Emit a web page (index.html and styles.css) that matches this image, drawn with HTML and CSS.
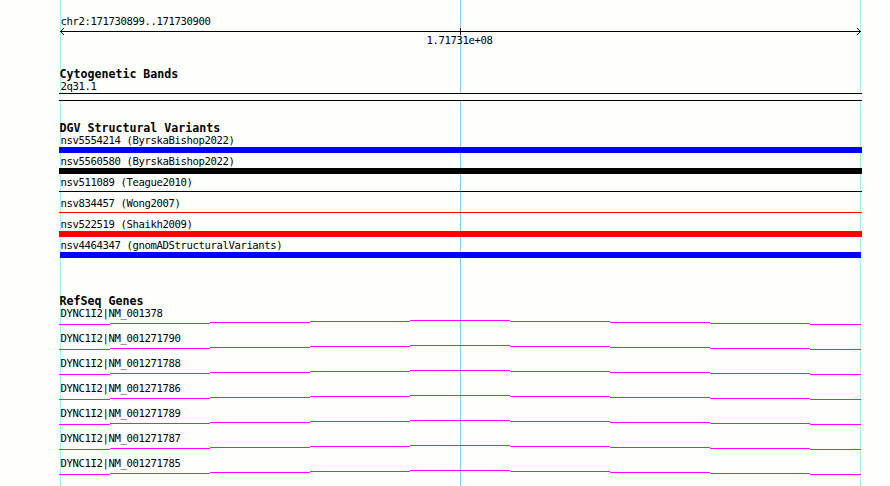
FILE: index.html
```
<!DOCTYPE html>
<html lang="en">
<head>
  <meta charset="UTF-8">
  <title>chr2:171730899..171730900</title>
  <link rel="stylesheet" href="styles.css">
</head>
<body>

  <svg class="defs" width="0" height="0">
    <defs>
      <path id="intron" d="M0 4.5H51M51 3.5H151M151 2.5H251M251 1.5H351M351 .5H451M451 1.5H551M551 2.5H651M651 3.5H751M751 4.5H802" />
    </defs>
  </svg>

  <div class="browser">
    <div class="ruler">
      <div class="label">chr2:171730899..171730900</div>
      <svg class="axis" width="803" height="7" viewBox="0 0 803 7">
        <path d="M1 3h801v1H1zM401 0h1v7h-1z" />
        <path d="M2 2h1v1h-1zM3 1h1v1h-1zM4 0h1v1h-1zM2 4h1v1h-1zM3 5h1v1h-1zM4 6h1v1h-1z" />
        <path d="M800 2h1v1h-1zM799 1h1v1h-1zM798 0h1v1h-1zM800 4h1v1h-1zM799 5h1v1h-1zM798 6h1v1h-1z" />
      </svg>
      <div class="tick">1.71731e+08</div>
    </div>

    <div class="track bands">
      <h2>Cytogenetic Bands</h2>
      <div class="label">2q31.1</div>
      <div class="band"></div>
    </div>

    <div class="track variants">
      <h2>DGV Structural Variants</h2>
      <div class="row"><div class="label">nsv5554214 (ByrskaBishop2022)</div><div class="bar blue"></div></div>
      <div class="row"><div class="label">nsv5560580 (ByrskaBishop2022)</div><div class="bar black"></div></div>
      <div class="row"><div class="label">nsv511089 (Teague2010)</div><div class="bar thin black"></div></div>
      <div class="row"><div class="label">nsv834457 (Wong2007)</div><div class="bar thin red"></div></div>
      <div class="row"><div class="label">nsv522519 (Shaikh2009)</div><div class="bar red"></div></div>
      <div class="row"><div class="label">nsv4464347 (gnomADStructuralVariants)</div><div class="bar blue short"></div></div>
    </div>

    <div class="track genes">
      <h2>RefSeq Genes</h2>
      <div class="row"><div class="label">DYNC1I2|NM_001378</div><svg class="gene"><use href="#intron" /></svg></div>
      <div class="row"><div class="label">DYNC1I2|NM_001271790</div><svg class="gene"><use href="#intron" /></svg></div>
      <div class="row"><div class="label">DYNC1I2|NM_001271788</div><svg class="gene"><use href="#intron" /></svg></div>
      <div class="row"><div class="label">DYNC1I2|NM_001271786</div><svg class="gene"><use href="#intron" /></svg></div>
      <div class="row"><div class="label">DYNC1I2|NM_001271789</div><svg class="gene"><use href="#intron" /></svg></div>
      <div class="row"><div class="label">DYNC1I2|NM_001271787</div><svg class="gene"><use href="#intron" /></svg></div>
      <div class="row"><div class="label">DYNC1I2|NM_001271785</div><svg class="gene"><use href="#intron" /></svg></div>
    </div>
  </div>

</body>
</html>
```
FILE: styles.css
```
body {
  margin: 0;
  overflow: hidden;
  background: #fdfffc;
  color: #000;
  font-family: "DejaVu Sans Mono", "Liberation Mono", monospace;
  font-size: 10.6px;
  letter-spacing: -0.382px;
}
svg {
  display: block;
  shape-rendering: crispEdges;
}
.defs {
  position: absolute;
}
/* grid lines run the full height behind the tracks */
.browser {
  box-sizing: border-box;
  height: 486px;
  padding: 15px 28px 0 59px;
  background:
    linear-gradient(#afeeee, #afeeee) 60px 0 / 1px 100% no-repeat,
    linear-gradient(#87ceeb, #87ceeb) 460px 0 / 1px 100% no-repeat,
    linear-gradient(#afeeee, #afeeee) 860px 0 / 1px 100% no-repeat;
}
h2 {
  height: 12px;
  margin: 0;
  padding-left: 0.5px;
  font-size: 11.627px;
  letter-spacing: 0;
  line-height: 12px;
  white-space: pre;
}
.label {
  height: 13px;
  padding-left: 1.5px;
  line-height: 13px;
  white-space: pre;
}
.tick {
  height: 12px;
  margin-top: -1px;
  line-height: 13px;
  padding-left: 367.5px;
}
.bands {
  margin-top: 22px;
}
.band {
  box-sizing: border-box;
  height: 8px;
  border: solid #000;
  border-width: 1px 0;
  background: #fdfffc;
}
.variants {
  margin-top: 21px;
}
.variants .row {
  height: 21px;
}
.bar {
  height: 6px;
}
.bar.thin {
  height: 1px;
  margin-top: 2px;
}
.bar.short {
  margin: 0 1px;
}
.blue { background: #00f; }
.black { background: #000; }
.red { background: #f00; }
.genes {
  margin-top: 35px;
}
.genes .row {
  height: 25px;
}
.gene {
  width: 802px;
  height: 5px;
  fill: none;
  stroke: #f0f;
}
```
